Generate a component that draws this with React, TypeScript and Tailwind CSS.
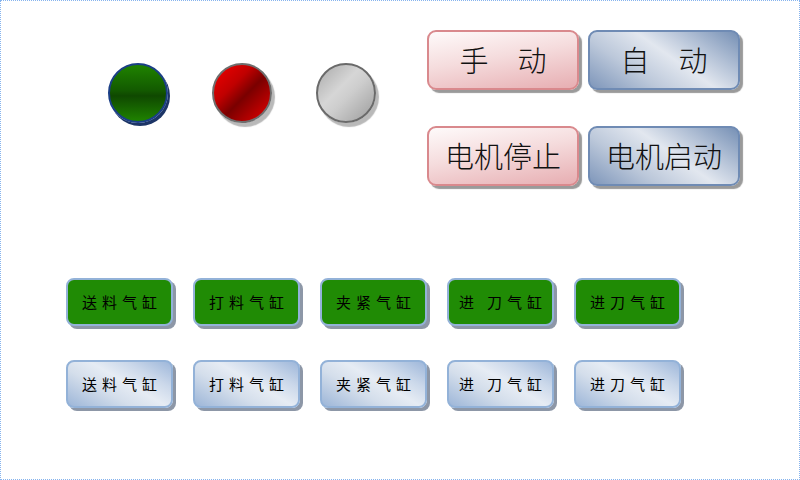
import React from "react";

const cjk = { fontFamily: '"Noto Sans CJK SC", "Noto Sans", sans-serif' };

function Lamp({ kind }: { kind: "green" | "red" | "gray" }) {
  const cls =
    kind === "green"
      ? "border-[#1b3f86] bg-[linear-gradient(180deg,#1f8200_0%,#135a00_45%,#0f4800_55%,#1f8200_100%)] shadow-[2px_3px_0_#1d3566]"
      : kind === "red"
      ? "border-[#6e6e6e] bg-[linear-gradient(135deg,#f20000_0%,#c00000_35%,#7a0000_55%,#e80000_100%)] shadow-[3px_4px_1px_#b9b9b9]"
      : "border-[#6a6a6a] bg-[linear-gradient(135deg,#a9a9a9_0%,#d6d6d6_40%,#cdcdcd_55%,#9c9c9c_100%)] shadow-[3px_4px_1px_#b9b9b9]";
  return <div className={`w-[60px] h-[60px] rounded-full border-2 ${cls}`} />;
}

function BigButton({ label, tone }: { label: string; tone: "pink" | "blue" }) {
  const cls =
    tone === "pink"
      ? "border-[#d9898d] bg-[linear-gradient(170deg,#fefafa_0%,#f5dcdd_45%,#e7aeb2_100%)]"
      : "border-[#6f8bb4] bg-[linear-gradient(35deg,#7e96ba_0%,#bcc8da_30%,#e2e7ef_55%,#b3c1d6_75%,#7690b5_100%)]";
  return (
    <div
      className={`w-[152px] h-[60px] rounded-[9px] border-2 flex items-center justify-center text-[29px] font-light text-[#111] shadow-[3px_3px_1px_#9a9a9a] ${cls}`}
      style={cjk}
    >
      {label}
    </div>
  );
}

function SmallButton({ label, tone }: { label: string; tone: "green" | "light" }) {
  const cls =
    tone === "green"
      ? "bg-[#208b05] border-[#93b2d8]"
      : "border-[#93b2d8] bg-[linear-gradient(30deg,#9db6d8_0%,#d4deeb_35%,#e6ecf4_55%,#cbd8ea_75%,#9eb7da_100%)]";
  return (
    <div
      className={`w-[107px] h-[48px] rounded-[8px] border-2 flex items-center justify-center pl-[5px] text-[15px] tracking-[5px] text-black shadow-[3px_3px_0_#8d97a7] ${cls}`}
      style={cjk}
    >
      {label}
    </div>
  );
}

export default function App() {
  const labels = ["送料气缸", "打料气缸", "夹紧气缸", "进\u2009刀气缸", "进刀气缸"];
  return (
    <div className="w-[800px] h-[480px] bg-white border border-dotted border-[#86b4ee] overflow-hidden flex flex-col">
      <div className="flex pt-[29px]">
        <div className="flex gap-[44px] ml-[107px] mt-[33px] h-[60px]">
          <Lamp kind="green" />
          <Lamp kind="red" />
          <Lamp kind="gray" />
        </div>
        <div className="ml-[51px] grid grid-cols-[152px_152px] gap-x-[9px] gap-y-[36px]">
          <BigButton label="手　动" tone="pink" />
          <BigButton label="自　动" tone="blue" />
          <BigButton label="电机停止" tone="pink" />
          <BigButton label="电机启动" tone="blue" />
        </div>
      </div>
      <div className="ml-[65px] mt-[92px] flex flex-col gap-y-[34px]">
        <div className="flex gap-x-[20px]">
          {labels.map((l, i) => (
            <SmallButton key={i} label={l} tone="green" />
          ))}
        </div>
        <div className="flex gap-x-[20px]">
          {labels.map((l, i) => (
            <SmallButton key={i} label={l} tone="light" />
          ))}
        </div>
      </div>
    </div>
  );
}
